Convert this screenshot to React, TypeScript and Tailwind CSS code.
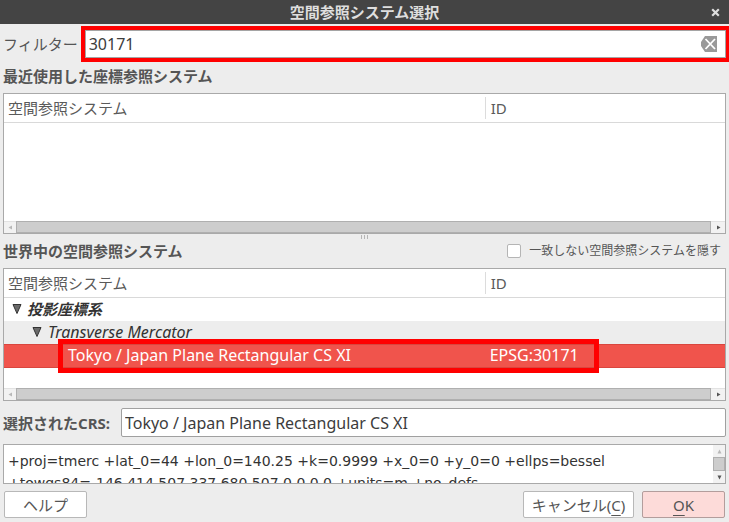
import React, { useState } from "react";

type Direction = "left" | "right" | "up" | "down";

const arrowPaths: Record<Direction, string> = {
  left: "M4 0.5V4.5L0.5 2.5Z",
  right: "M1 0.5V4.5L4.5 2.5Z",
  up: "M0.5 4.5H4.5L2.5 0.5Z",
  down: "M0.5 0.5H4.5L2.5 4.5Z",
};

function ScrollArrow({ direction, muted }: { direction: Direction; muted?: boolean }) {
  return (
    <svg viewBox="0 0 5 5" className={muted ? "size-[5px] text-[#b8b8b8]" : "size-[5px] text-[#555555]"} aria-hidden="true">
      <path d={arrowPaths[direction]} fill="currentColor" />
    </svg>
  );
}

function HorizontalScrollbar() {
  return (
    <div className="flex h-3 bg-[#f2f2f2]">
      <button type="button" aria-label="左へスクロール" className="flex w-3 items-center justify-center border-t border-[#e2e2e2]">
        <ScrollArrow direction="left" muted />
      </button>
      <div className="flex-1 border border-[#afafaf] bg-[#cdcdcd]" />
      <button type="button" aria-label="右へスクロール" className="flex w-3.5 items-center justify-center border-t border-[#e2e2e2]">
        <ScrollArrow direction="right" />
      </button>
    </div>
  );
}

function HeaderRow() {
  return (
    <thead>
      <tr className="h-7 border-b border-[#d9d9d9] text-left text-[#5a5a5a]">
        <th scope="col" className="w-2/3 pl-1 font-normal">
          空間参照システム
        </th>
        <th scope="col" className="font-normal">
          <span className="block border-l border-[#dcdcdc] pl-[5px] leading-[22px]">ID</span>
        </th>
      </tr>
    </thead>
  );
}

function Expander() {
  return (
    <svg viewBox="0 0 10 10" className="size-[10px] shrink-0" aria-hidden="true">
      <path d="M1 0.5H9L5 9.5Z" fill="#6a6a6a" stroke="#333333" strokeLinejoin="round" />
    </svg>
  );
}

function Highlight({ className }: { className: string }) {
  return <div aria-hidden="true" className={"pointer-events-none absolute border-[#ff0000] " + className} />;
}

export default function App() {
  const [filter, setFilter] = useState("30171");
  const [hideOthers, setHideOthers] = useState(false);

  return (
    <div
      role="dialog"
      aria-labelledby="title"
      className="min-h-screen overflow-hidden bg-[#ededed] font-['Noto_Sans','Noto_Sans_CJK_JP',sans-serif] text-[15px] leading-[22px] text-[#555555]"
    >
      <header className="relative flex h-6 items-center justify-center bg-[#444444]">
        <h1 id="title" className="font-bold text-[#dedede]">
          空間参照システム選択
        </h1>
        <button type="button" aria-label="閉じる" className="absolute right-[9px] text-[#dedede]">
          <svg viewBox="0 0 9 9" className="size-[9px]" aria-hidden="true">
            <path d="M1.2 1.2L7.8 7.8M7.8 1.2L1.2 7.8" stroke="currentColor" strokeWidth="2.2" />
          </svg>
        </button>
      </header>

      <main className="px-[3px]">
        <div className="flex items-center gap-[7px] pt-1.5">
          <label htmlFor="filter" className="shrink-0">
            フィルター
          </label>
          <div className="relative flex h-7 flex-1 items-center border border-[#a5a5a5] bg-white pr-2 pl-[3px]">
            <input
              id="filter"
              value={filter}
              onChange={(e) => setFilter(e.target.value)}
              className="min-w-0 flex-1 bg-transparent text-base leading-[22px] text-[#3c3c3c] outline-none"
            />
            <button type="button" aria-label="クリア" onClick={() => setFilter("")}>
              <svg viewBox="0 0 16 16" className="size-4" aria-hidden="true">
                <path d="M4 0H16V16H4L0 10V6Z" fill="#999999" />
                <path d="M4.5 3L14 13M14 3L4.5 13" stroke="#ffffff" strokeWidth="1.8" />
              </svg>
            </button>
            <Highlight className="-inset-x-[5px] -inset-y-[5px] border-4" />
          </div>
        </div>

        <h2 className="pt-[7px] pb-1.5 font-bold">最近使用した座標参照システム</h2>
        <div className="border border-[#a9a9a9] bg-white">
          <div className="h-[127px]">
            <table className="w-full table-fixed">
              <HeaderRow />
            </table>
          </div>
          <HorizontalScrollbar />
        </div>

        <div className="flex h-1.5 items-center justify-center gap-0.5" aria-hidden="true">
          <span className="h-1 w-px bg-[#b5b5b5]" />
          <span className="h-1 w-px bg-[#b5b5b5]" />
          <span className="h-1 w-px bg-[#b5b5b5]" />
        </div>

        <div className="flex items-center justify-between pr-[5px] pb-1.5">
          <h2 className="font-bold">世界中の空間参照システム</h2>
          <label className="flex items-center gap-2 text-xs leading-[22px]">
            <input
              type="checkbox"
              checked={hideOthers}
              onChange={(e) => setHideOthers(e.target.checked)}
              className="size-3.5 appearance-none rounded-xs border border-[#b5b5b5] bg-white checked:bg-[#f0544c]"
            />
            一致しない空間参照システムを隠す
          </label>
        </div>

        <div className="relative border border-[#a9a9a9] bg-white">
          <div className="h-[119px]">
            <table className="w-full table-fixed">
              <HeaderRow />
              <tbody className="text-[#333333]">
                <tr className="h-6">
                  <td colSpan={2} className="pl-2">
                    <span className="flex items-center gap-[5px] font-bold italic">
                      <Expander />
                      投影座標系
                    </span>
                  </td>
                </tr>
                <tr className="h-[23px] bg-[#ededed]">
                  <td colSpan={2} className="pl-7">
                    <span className="flex items-center gap-1.5 text-base leading-[22px] italic">
                      <Expander />
                      Transverse Mercator
                    </span>
                  </td>
                </tr>
                <tr className="h-[23px] border-y border-[#d9463e] bg-[#f0544c] text-base text-white">
                  <td className="pl-16 leading-[21px]">Tokyo / Japan Plane Rectangular CS XI</td>
                  <td className="pl-[5px] leading-[21px]">EPSG:30171</td>
                </tr>
              </tbody>
            </table>
          </div>
          <HorizontalScrollbar />
          <Highlight className="top-[70px] left-[54px] h-[34px] w-3/4 border-[5px]" />
        </div>

        <div className="flex items-center gap-[11px] py-[7px]">
          <label htmlFor="selected" className="shrink-0 font-bold">
            選択されたCRS:
          </label>
          <input
            id="selected"
            readOnly
            value="Tokyo / Japan Plane Rectangular CS XI"
            className="h-[29px] min-w-0 flex-1 rounded-xs border border-[#a0a0a0] bg-white px-[3px] text-base text-[#3c3c3c] outline-none"
          />
        </div>

        <div className="flex h-10 border border-[#a9a9a9] bg-white">
          <textarea
            aria-label="CRS定義"
            readOnly
            value="+proj=tmerc +lat_0=44 +lon_0=140.25 +k=0.9999 +x_0=0 +y_0=0 +ellps=bessel +towgs84=-146.414,507.337,680.507,0,0,0,0 +units=m +no_defs"
            className="min-w-0 flex-1 resize-none overflow-hidden px-1 pt-[5px] font-['DejaVu_Sans',sans-serif] text-sm leading-[22px] text-[#333333] outline-none"
          />
          <div className="flex w-3 flex-col bg-[#f2f2f2]">
            <button type="button" aria-label="上へスクロール" className="flex h-3 items-center justify-center">
              <ScrollArrow direction="up" muted />
            </button>
            <div className="flex-1 border border-[#afafaf] bg-[#cdcdcd]" />
            <button type="button" aria-label="下へスクロール" className="flex h-3 items-center justify-center">
              <ScrollArrow direction="down" />
            </button>
          </div>
        </div>

        <footer className="flex gap-2 px-px pt-[7px] pb-1">
          <button type="button" className="mr-auto h-[27px] w-[83px] rounded-xs border border-[#b8b8b8] bg-white">
            ヘルプ
          </button>
          <button type="button" className="h-[27px] w-[111px] rounded-xs border border-[#b8b8b8] bg-white">
            キャンセル(<span className="underline underline-offset-4">C</span>)
          </button>
          <button type="button" className="h-[27px] w-[83px] rounded-xs border border-[#b39d9c] bg-[#fddbd9]">
            <span className="underline underline-offset-4">O</span>K
          </button>
        </footer>
      </main>
    </div>
  );
}
